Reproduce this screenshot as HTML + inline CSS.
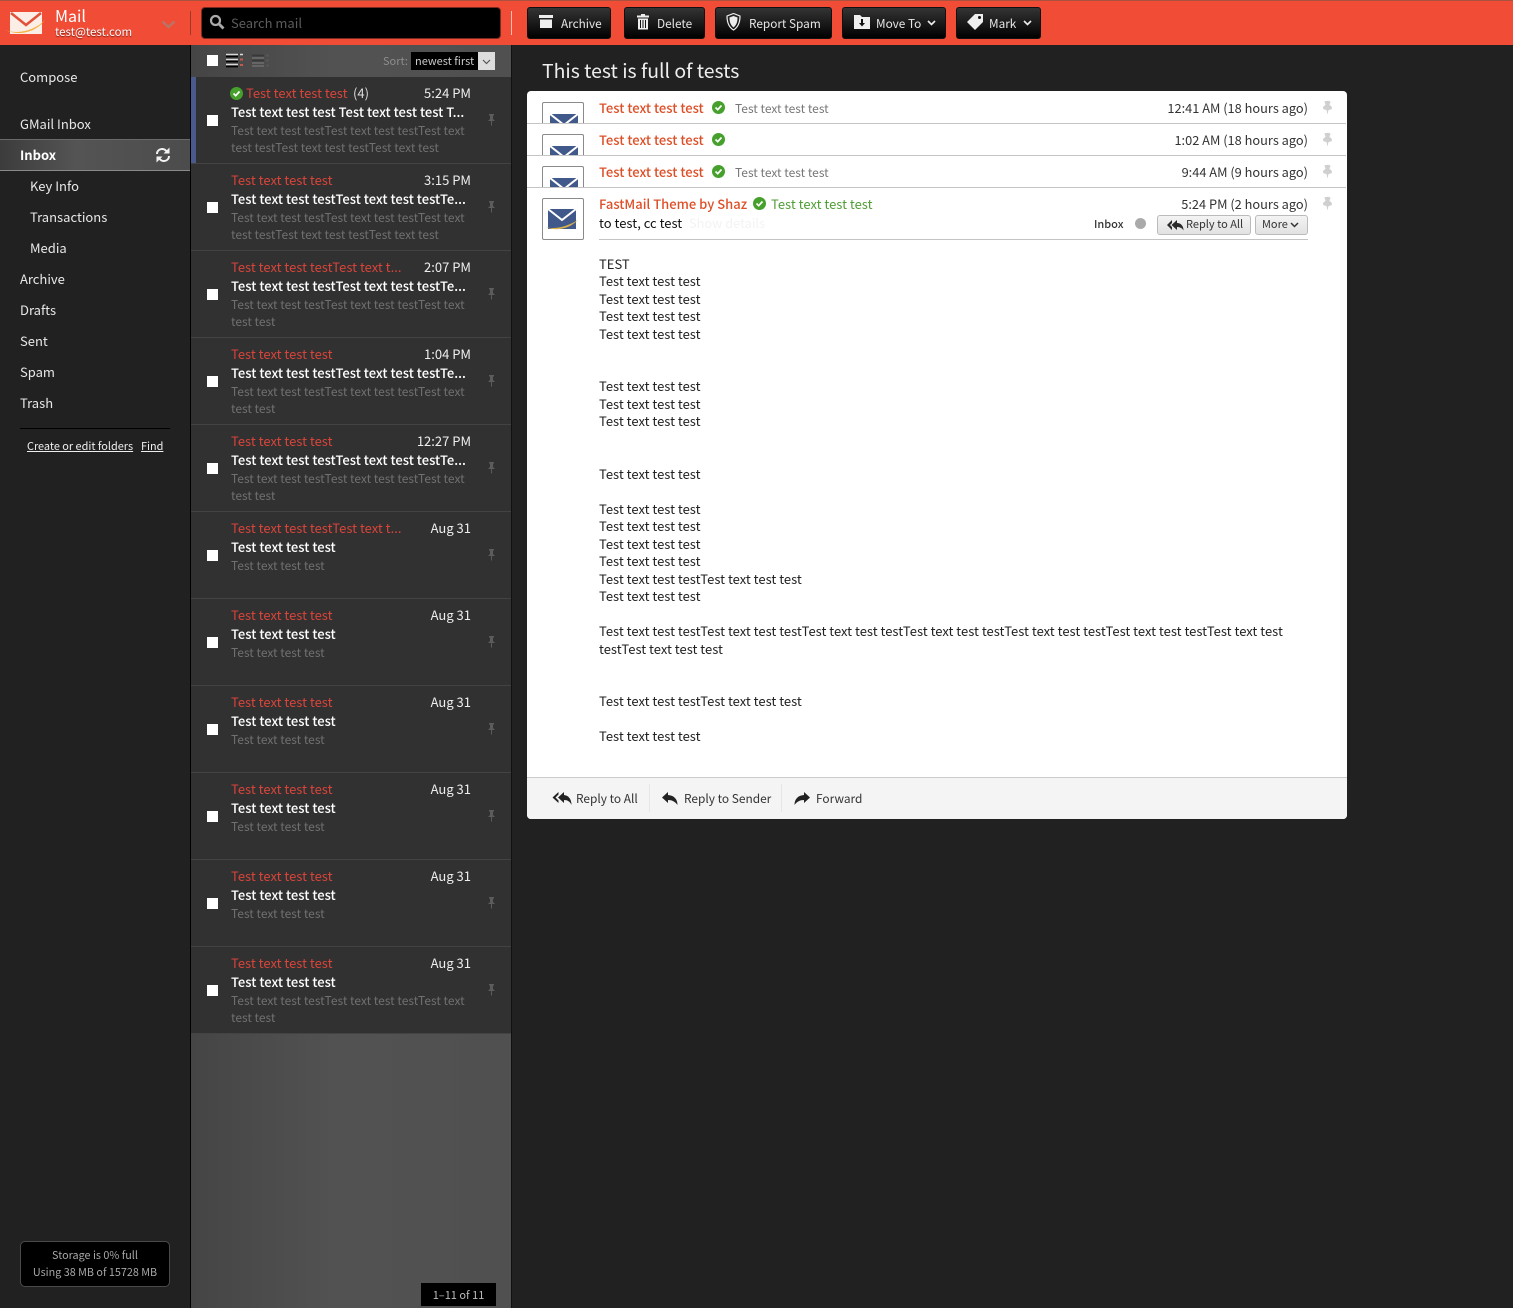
<!DOCTYPE html>
<html lang="en"><head><meta charset="utf-8"><title>Mail</title>
<style>
*{box-sizing:border-box}
html,body{margin:0;padding:0;width:1513px;height:1308px;overflow:hidden;background:#212121}
body{position:relative;font-family:"Noto Sans CJK JP","Liberation Sans",sans-serif;font-size:13px;color:#111}
.a,.t,svg{position:absolute}
.t{white-space:nowrap;line-height:18px}
.n{color:#e8e8e8;left:20px;font-size:13px}
.n2{left:30px}
.row{position:absolute;left:191px;width:320px;height:87px;background:#313131;border-bottom:1px solid #434343}
.cb{position:absolute;left:16px;top:38px;width:11px;height:11px;background:#fff}
.s{left:40px;top:7px;color:#d8443a;font-size:13px}
.d{right:40px;top:7px;color:#eee;font-size:13px}
.b{left:40px;top:26px;color:#fff;font-size:13px;font-weight:500;width:240px;overflow:hidden}
.p{left:40px;top:45px;color:#707070;font-size:12px;line-height:17px;white-space:normal;width:240px}
.pin{position:absolute;left:296px;top:37px}
.btn{position:absolute;top:7px;height:32px;border-radius:3px;background:linear-gradient(#343434,#000);border:1px solid #111}
.btn .t{color:#e6e6e6;font-size:11.800px;top:7px}
.on{color:#de4f27;font-weight:500;left:599px;font-size:13px}
.gr{color:#777;font-size:12px;left:735px}
.tm{right:205px;color:#333;font-size:12.800px}
.sep{position:absolute;left:527px;width:819px;height:1px;background:#c4c4c4}
.av{position:absolute;left:542px;width:42px;background:#fff;border:1px solid #8a8a8a;border-bottom:0;border-radius:2px 2px 0 0;overflow:hidden}
</style></head><body>

<!-- Header -->
<div class="a" style="left:0;top:0;width:1513px;height:45px;background:#f04c36;border-top:1px solid #a8533f"></div>
<svg style="left:5px;top:11px" width="41" height="24" viewBox="0 0 41 24"><path d="M5 1H37V23H5Z" fill="#fbeee6"/><path d="M6 2L21 14L36 2" fill="none" stroke="#e2503a" stroke-width="2.500"/><path d="M0 19C14 24 30 19 40 9C32 20 16 26 0 19Z" fill="#f6b13e"/></svg>
<div class="t" style="left:55px;top:6px;color:#fff;font-size:16px">Mail</div>
<div class="t" style="left:55px;top:23px;color:#fff;font-size:11.500px;text-shadow:0 1px 1px #7a1a10">test@test.com</div>
<svg style="left:161px;top:20px" width="15" height="9" viewBox="0 0 15 9"><path d="M1.500 1.500L7.500 7L13.500 1.500" fill="none" stroke="#b87465" stroke-width="2.500"/></svg>
<div class="a" style="left:190px;top:11px;width:1px;height:24px;background:#9c3a2a"></div>
<div class="a" style="left:201px;top:7px;width:300px;height:32px;background:#000;border-radius:4px;border:1px solid #7a2a1e"></div>
<svg style="left:209px;top:14px" width="16" height="16" viewBox="0 0 16 16"><circle cx="6.500" cy="6.500" r="4.500" fill="none" stroke="#aaa" stroke-width="2.200"/><path d="M10 10L14.500 14.500" stroke="#aaa" stroke-width="2.800"/></svg>
<div class="t" style="left:231px;top:14px;color:#5c5c5c;font-size:13px">Search mail</div>
<div class="a" style="left:511px;top:11px;width:1px;height:24px;background:#f7bcb0"></div>

<div class="btn" style="left:527px;width:84px"><svg style="left:11px;top:7px" width="15" height="14" viewBox="0 0 15 14"><path d="M0 0H14V3H0ZM1 4.500H13V13H1Z" fill="#eee"/></svg><div class="t" style="left:33px">Archive</div></div>
<div class="btn" style="left:624px;width:81px"><svg style="left:11px;top:6px" width="14" height="16" viewBox="0 0 14 16"><path d="M5 0H9V1.500H13V3.500H1V1.500H5ZM2 4.500H12V15.500H2Z" fill="#eee"/><path d="M4.500 6V14M7 6V14M9.500 6V14" stroke="#111" stroke-width="1"/></svg><div class="t" style="left:32px">Delete</div></div>
<div class="btn" style="left:715px;width:117px"><svg style="left:10px;top:5px" width="15" height="18" viewBox="0 0 15 18"><path d="M7.500 .500L14 3C14 9 12.500 14 7.500 17C2.500 14 1 9 1 3Z" fill="none" stroke="#eee" stroke-width="1.200"/><path d="M7.500 3L11.500 4.500C11.500 9 10.500 12 7.500 14.500C4.500 12 3.500 9 3.500 4.500Z" fill="#eee"/></svg><div class="t" style="left:33px">Report Spam</div></div>
<div class="btn" style="left:842px;width:104px"><svg style="left:11px;top:7px" width="16" height="14" viewBox="0 0 16 14"><path d="M0 0H6L8 2H16V14H0Z" fill="#eee"/><path d="M7 4H9V8H11L8 11.500L5 8H7Z" fill="#111"/></svg><div class="t" style="left:33px">Move To</div><svg style="left:84px;top:12px" width="9" height="6" viewBox="0 0 9 6"><path d="M1 1L4.500 4.500L8 1" fill="none" stroke="#eee" stroke-width="1.600"/></svg></div>
<div class="btn" style="left:956px;width:85px"><svg style="left:9px;top:5px" width="18" height="18" viewBox="0 0 18 18"><path d="M9 1H17V9L9 17L1 9Z" fill="#eee"/><circle cx="13.500" cy="4.500" r="1.500" fill="#111"/></svg><div class="t" style="left:32px">Mark</div><svg style="left:66px;top:12px" width="9" height="6" viewBox="0 0 9 6"><path d="M1 1L4.500 4.500L8 1" fill="none" stroke="#eee" stroke-width="1.600"/></svg></div>

<!-- Sidebar -->
<div class="t n" style="top:68px">Compose</div>
<div class="t n" style="top:115px">GMail Inbox</div>
<div class="a" style="left:0;top:139px;width:190px;height:32px;background:linear-gradient(90deg,#3c3c3c,#545454 40%,#4c4c4c);border-top:1px solid #6a6a6a;border-bottom:1px solid #8a8a8a"></div>
<div class="t" style="left:20px;top:146px;color:#fff;font-weight:700;font-size:13px">Inbox</div>
<svg style="left:155px;top:147px" width="16" height="16" viewBox="0 0 16 16"><path d="M2 7C2 3 6 1 9.500 2.500L12 4.500M14 9C14 13 10 15 6.500 13.500L4 11.500" fill="none" stroke="#f2f2f2" stroke-width="2"/><path d="M14.500 .500V6.500H8.500ZM1.500 15.500V9.500H7.500Z" fill="#f2f2f2"/></svg>
<div class="t n n2" style="top:177px">Key Info</div>
<div class="t n n2" style="top:208px">Transactions</div>
<div class="t n n2" style="top:239px">Media</div>
<div class="t n" style="top:270px">Archive</div>
<div class="t n" style="top:301px">Drafts</div>
<div class="t n" style="top:332px">Sent</div>
<div class="t n" style="top:363px">Spam</div>
<div class="t n" style="top:394px">Trash</div>
<div class="a" style="left:20px;top:428px;width:150px;height:1px;background:#000"></div>
<div class="t" style="left:27px;top:437px;color:#eee;font-size:10.900px;text-decoration:underline">Create or edit folders</div>
<div class="t" style="left:141px;top:437px;color:#eee;font-size:10.900px;text-decoration:underline">Find</div>
<div class="a" style="left:20px;top:1241px;width:150px;height:46px;background:#000;border:1px solid #4a4a4a;border-radius:5px"></div>
<div class="t" style="left:20px;width:150px;top:1246px;text-align:center;color:#a8a8a8;font-size:10.800px">Storage is 0% full</div>
<div class="t" style="left:20px;width:150px;top:1263px;text-align:center;color:#a8a8a8;font-size:10.800px">Using 38 MB of 15728 MB</div>

<!-- List -->
<div class="a" style="left:190px;top:45px;width:322px;height:1263px;background:linear-gradient(90deg,#454545,#525252 45%,#505050);border-left:1px solid #000;border-right:1px solid #111"></div>
<div class="a" style="left:207px;top:55px;width:11px;height:11px;background:#fff"></div>
<svg style="left:226px;top:53px" width="18" height="16" viewBox="0 0 18 16"><path d="M0 1.500H12M0 6.500H12M0 11.500H12" stroke="#d8d8d8" stroke-width="1.500"/><path d="M0 3.500H12M0 8.500H12M0 13.500H12" stroke="#000" stroke-width="1.800"/><path d="M14 1.500H17" stroke="#ddd" stroke-width="1.500"/><path d="M14 6.500H17M14 12H17" stroke="#c25a52" stroke-width="2"/></svg>
<svg style="left:252px;top:53px" width="18" height="16" viewBox="0 0 18 16"><path d="M0 2.500H12M0 7.500H12" stroke="#383838" stroke-width="1.800"/><path d="M0 5H12M0 10H12M0 13H12" stroke="#6e6e6e" stroke-width="1.500"/><path d="M14 2.500H17M14 7.500H17M14 12.500H17" stroke="#5e5454" stroke-width="2"/></svg>
<div class="t" style="left:383px;top:52px;color:#8d8d8d;font-size:11px">Sort:</div>
<div class="a" style="left:411px;top:52px;width:67px;height:18px;background:#000"></div>
<div class="t" style="left:415px;top:52px;color:#ccc;font-size:11px">newest first</div>
<div class="a" style="left:478px;top:52px;width:17px;height:18px;background:#ddd"></div>
<svg style="left:482px;top:59px" width="9" height="6" viewBox="0 0 9 6"><path d="M1 1L4.500 4.500L8 1" fill="none" stroke="#555" stroke-width="1.200"/></svg>

<div class="row" style="top:77px"><div class="a" style="left:0;top:0;width:5px;height:86px;background:#4b5a8c"></div><div class="cb"></div>
<svg style="left:39px;top:10px" width="13" height="13" viewBox="0 0 13 13"><circle cx="6.500" cy="6.500" r="6.500" fill="#46a02c"/><path d="M3.500 6.500L5.700 8.700L9.500 4.500" fill="none" stroke="#fff" stroke-width="1.700"/></svg>
<div class="t" style="left:55px;top:7px;color:#d8443a;font-size:13px">Test text test test</div><div class="t" style="left:162px;top:7px;color:#ddd;font-size:13px">(4)</div><div class="t d">5:24 PM</div>
<div class="t b">Test text test test Test text test test T...</div>
<div class="t p">Test text test testTest text test testTest text test testTest text test testTest text test</div>
<svg class="pin" width="9" height="12" viewBox="0 0 9 12"><path d="M2 0H7V1.500H6V5L8 7H5V11.500H4V7H1L3 5V1.500H2Z" fill="#5c5c5c"/></svg></div>

<div class="row" style="top:164px"><div class="cb"></div><div class="t s">Test text test test</div><div class="t d">3:15 PM</div>
<div class="t b">Test text test testTest text test testTe...</div>
<div class="t p">Test text test testTest text test testTest text test testTest text test testTest text test</div>
<svg class="pin" width="9" height="12" viewBox="0 0 9 12"><path d="M2 0H7V1.500H6V5L8 7H5V11.500H4V7H1L3 5V1.500H2Z" fill="#5c5c5c"/></svg></div>

<div class="row" style="top:251px"><div class="cb"></div><div class="t s">Test text test testTest text t...</div><div class="t d">2:07 PM</div>
<div class="t b">Test text test testTest text test testTe...</div>
<div class="t p">Test text test testTest text test testTest text test test</div>
<svg class="pin" width="9" height="12" viewBox="0 0 9 12"><path d="M2 0H7V1.500H6V5L8 7H5V11.500H4V7H1L3 5V1.500H2Z" fill="#5c5c5c"/></svg></div>

<div class="row" style="top:338px"><div class="cb"></div><div class="t s">Test text test test</div><div class="t d">1:04 PM</div>
<div class="t b">Test text test testTest text test testTe...</div>
<div class="t p">Test text test testTest text test testTest text test test</div>
<svg class="pin" width="9" height="12" viewBox="0 0 9 12"><path d="M2 0H7V1.500H6V5L8 7H5V11.500H4V7H1L3 5V1.500H2Z" fill="#5c5c5c"/></svg></div>

<div class="row" style="top:425px"><div class="cb"></div><div class="t s">Test text test test</div><div class="t d">12:27 PM</div>
<div class="t b">Test text test testTest text test testTe...</div>
<div class="t p">Test text test testTest text test testTest text test test</div>
<svg class="pin" width="9" height="12" viewBox="0 0 9 12"><path d="M2 0H7V1.500H6V5L8 7H5V11.500H4V7H1L3 5V1.500H2Z" fill="#5c5c5c"/></svg></div>

<div class="row" style="top:512px"><div class="cb"></div><div class="t s">Test text test testTest text t...</div><div class="t d">Aug 31</div>
<div class="t b">Test text test test</div>
<div class="t p">Test text test test</div>
<svg class="pin" width="9" height="12" viewBox="0 0 9 12"><path d="M2 0H7V1.500H6V5L8 7H5V11.500H4V7H1L3 5V1.500H2Z" fill="#5c5c5c"/></svg></div>

<div class="row" style="top:599px"><div class="cb"></div><div class="t s">Test text test test</div><div class="t d">Aug 31</div>
<div class="t b">Test text test test</div>
<div class="t p">Test text test test</div>
<svg class="pin" width="9" height="12" viewBox="0 0 9 12"><path d="M2 0H7V1.500H6V5L8 7H5V11.500H4V7H1L3 5V1.500H2Z" fill="#5c5c5c"/></svg></div>

<div class="row" style="top:686px"><div class="cb"></div><div class="t s">Test text test test</div><div class="t d">Aug 31</div>
<div class="t b">Test text test test</div>
<div class="t p">Test text test test</div>
<svg class="pin" width="9" height="12" viewBox="0 0 9 12"><path d="M2 0H7V1.500H6V5L8 7H5V11.500H4V7H1L3 5V1.500H2Z" fill="#5c5c5c"/></svg></div>

<div class="row" style="top:773px"><div class="cb"></div><div class="t s">Test text test test</div><div class="t d">Aug 31</div>
<div class="t b">Test text test test</div>
<div class="t p">Test text test test</div>
<svg class="pin" width="9" height="12" viewBox="0 0 9 12"><path d="M2 0H7V1.500H6V5L8 7H5V11.500H4V7H1L3 5V1.500H2Z" fill="#5c5c5c"/></svg></div>

<div class="row" style="top:860px"><div class="cb"></div><div class="t s">Test text test test</div><div class="t d">Aug 31</div>
<div class="t b">Test text test test</div>
<div class="t p">Test text test test</div>
<svg class="pin" width="9" height="12" viewBox="0 0 9 12"><path d="M2 0H7V1.500H6V5L8 7H5V11.500H4V7H1L3 5V1.500H2Z" fill="#5c5c5c"/></svg></div>

<div class="row" style="top:947px"><div class="cb"></div><div class="t s">Test text test test</div><div class="t d">Aug 31</div>
<div class="t b">Test text test test</div>
<div class="t p">Test text test testTest text test testTest text test test</div>
<svg class="pin" width="9" height="12" viewBox="0 0 9 12"><path d="M2 0H7V1.500H6V5L8 7H5V11.500H4V7H1L3 5V1.500H2Z" fill="#5c5c5c"/></svg></div>

<div class="a" style="left:421px;top:1283px;width:75px;height:23px;background:#000"></div>
<div class="t" style="left:421px;width:75px;top:1286px;text-align:center;color:#bbb;font-size:11px">1–11 of 11</div>

<!-- Conversation -->
<div class="t" style="left:542px;top:56px;color:#eee;font-size:19.400px;line-height:28px">This test is full of tests</div>
<div class="a" style="left:527px;top:91px;width:820px;height:728px;background:#fff;border-radius:4px"></div>

<div class="av" style="top:102px;height:21px"><svg style="left:6px;top:11px" width="30" height="22" viewBox="0 0 30 22"><path d="M1 0H29V20H1Z" fill="#41598a"/><path d="M1 0L15 11L29 0" fill="none" stroke="#fff" stroke-width="2"/></svg></div>
<div class="av" style="top:134px;height:21px"><svg style="left:6px;top:11px" width="30" height="22" viewBox="0 0 30 22"><path d="M1 0H29V20H1Z" fill="#41598a"/><path d="M1 0L15 11L29 0" fill="none" stroke="#fff" stroke-width="2"/></svg></div>
<div class="av" style="top:166px;height:21px"><svg style="left:6px;top:11px" width="30" height="22" viewBox="0 0 30 22"><path d="M1 0H29V20H1Z" fill="#41598a"/><path d="M1 0L15 11L29 0" fill="none" stroke="#fff" stroke-width="2"/></svg></div>
<div class="sep" style="top:123px"></div><div class="sep" style="top:155px"></div><div class="sep" style="top:187px"></div>

<div class="t on" style="top:99px">Test text test test</div>
<svg style="left:712px;top:101px" width="13" height="13" viewBox="0 0 13 13"><circle cx="6.500" cy="6.500" r="6.500" fill="#46a02c"/><path d="M3.500 6.500L5.700 8.700L9.500 4.500" fill="none" stroke="#fff" stroke-width="1.700"/></svg>
<div class="t gr" style="top:100px">Test text test test</div>
<div class="t tm" style="top:99px">12:41 AM (18 hours ago)</div>

<div class="t on" style="top:131px">Test text test test</div>
<svg style="left:712px;top:133px" width="13" height="13" viewBox="0 0 13 13"><circle cx="6.500" cy="6.500" r="6.500" fill="#46a02c"/><path d="M3.500 6.500L5.700 8.700L9.500 4.500" fill="none" stroke="#fff" stroke-width="1.700"/></svg>
<div class="t tm" style="top:131px">1:02 AM (18 hours ago)</div>

<div class="t on" style="top:163px">Test text test test</div>
<svg style="left:712px;top:165px" width="13" height="13" viewBox="0 0 13 13"><circle cx="6.500" cy="6.500" r="6.500" fill="#46a02c"/><path d="M3.500 6.500L5.700 8.700L9.500 4.500" fill="none" stroke="#fff" stroke-width="1.700"/></svg>
<div class="t gr" style="top:164px">Test text test test</div>
<div class="t tm" style="top:163px">9:44 AM (9 hours ago)</div>

<svg style="left:1322px;top:100px" width="11" height="15" viewBox="0 0 11 15"><path d="M2.500 2C2.500 .500 8.500 .500 8.500 2C8.500 3 7.500 3.500 7.500 4.500C7.500 5.500 10 6 10 8C10 9.500 7 10 6.500 10L5.500 14.500L4.500 10C4 10 1 9.500 1 8C1 6 3.500 5.500 3.500 4.500C3.500 3.500 2.500 3 2.500 2Z" fill="#cfcfcf"/></svg>
<svg style="left:1322px;top:132px" width="11" height="15" viewBox="0 0 11 15"><path d="M2.500 2C2.500 .500 8.500 .500 8.500 2C8.500 3 7.500 3.500 7.500 4.500C7.500 5.500 10 6 10 8C10 9.500 7 10 6.500 10L5.500 14.500L4.500 10C4 10 1 9.500 1 8C1 6 3.500 5.500 3.500 4.500C3.500 3.500 2.500 3 2.500 2Z" fill="#cfcfcf"/></svg>
<svg style="left:1322px;top:164px" width="11" height="15" viewBox="0 0 11 15"><path d="M2.500 2C2.500 .500 8.500 .500 8.500 2C8.500 3 7.500 3.500 7.500 4.500C7.500 5.500 10 6 10 8C10 9.500 7 10 6.500 10L5.500 14.500L4.500 10C4 10 1 9.500 1 8C1 6 3.500 5.500 3.500 4.500C3.500 3.500 2.500 3 2.500 2Z" fill="#cfcfcf"/></svg>
<svg style="left:1322px;top:196px" width="11" height="15" viewBox="0 0 11 15"><path d="M2.500 2C2.500 .500 8.500 .500 8.500 2C8.500 3 7.500 3.500 7.500 4.500C7.500 5.500 10 6 10 8C10 9.500 7 10 6.500 10L5.500 14.500L4.500 10C4 10 1 9.500 1 8C1 6 3.500 5.500 3.500 4.500C3.500 3.500 2.500 3 2.500 2Z" fill="#cfcfcf"/></svg>

<div class="a" style="left:542px;top:198px;width:42px;height:42px;border:1px solid #8a8a8a;border-radius:2px;background:#fff"></div>
<svg style="left:544px;top:208px" width="38" height="24" viewBox="0 0 38 24"><path d="M4 1H32V21H4Z" fill="#41598a"/><path d="M4 1L18 12L32 1" fill="none" stroke="#fff" stroke-width="2"/><path d="M1 19C12 22 24 18 34 12C26 20 14 24 1 19Z" fill="#d9b24c"/></svg>
<div class="t on" style="top:195px">FastMail Theme by Shaz</div>
<svg style="left:753px;top:197px" width="13" height="13" viewBox="0 0 13 13"><circle cx="6.500" cy="6.500" r="6.500" fill="#46a02c"/><path d="M3.500 6.500L5.700 8.700L9.500 4.500" fill="none" stroke="#fff" stroke-width="1.700"/></svg>
<div class="t" style="left:771px;top:195px;color:#4f9e36;font-size:13px">Test text test test</div>
<div class="t tm" style="top:195px">5:24 PM (2 hours ago)</div>
<div class="t" style="left:599px;top:214px;color:#111;font-size:13px">to test, cc test</div>
<div class="t" style="left:689px;top:214px;color:#f3f3f3;font-size:12.800px">Show details</div>
<div class="t" style="left:1094px;top:215px;color:#333;font-size:11px;font-weight:500">Inbox</div>
<div class="a" style="left:1135px;top:218px;width:11px;height:11px;border-radius:50%;background:#aaa"></div>
<div class="a" style="left:1157px;top:215px;width:94px;height:20px;border:1px solid #bbb;border-radius:3px;background:linear-gradient(#f4f4f4,#e2e2e2)"></div>
<svg style="left:1166px;top:219px" width="18" height="12" viewBox="0 0 18 12"><path d="M6 1L1 6L6 11V8L4 6L6 4ZM11 1L5.500 6L11 11V8C14 8 16 9 17.500 11.500C17.500 7 15 4 11 4Z" fill="#2a2a2a"/></svg>
<div class="t" style="left:1186px;top:215px;color:#333;font-size:11px">Reply to All</div>
<div class="a" style="left:1255px;top:215px;width:53px;height:20px;border:1px solid #bbb;border-radius:3px;background:linear-gradient(#f4f4f4,#e2e2e2)"></div>
<div class="t" style="left:1262px;top:215px;color:#333;font-size:11px">More</div>
<svg style="left:1290px;top:222px" width="9" height="6" viewBox="0 0 9 6"><path d="M1 1L4.500 4.500L8 1" fill="none" stroke="#333" stroke-width="1.500"/></svg>
<div class="a" style="left:599px;top:239px;width:709px;height:1px;background:#c4c4c4"></div>

<div class="a" style="left:599px;top:254.750px;width:709px;line-height:17.500px;color:#222;font-size:13px">TEST<br>Test text test test<br>Test text test test<br>Test text test test<br>Test text test test<br><br><br>Test text test test<br>Test text test test<br>Test text test test<br><br><br>Test text test test<br><br>Test text test test<br>Test text test test<br>Test text test test<br>Test text test test<br>Test text test testTest text test test<br>Test text test test<br><br>Test text test testTest text test testTest text test testTest text test testTest text test testTest text test testTest text test<br>testTest text test test<br><br><br>Test text test testTest text test test<br><br>Test text test test</div>

<div class="a" style="left:527px;top:777px;width:820px;height:42px;background:#f4f4f4;border-top:1px solid #ccc;border-radius:0 0 4px 4px"></div>
<svg style="left:552px;top:791px" width="20" height="15" viewBox="0 0 20 15"><path d="M6.500 1L.500 6.500L6.500 12V9.500L3.500 6.500L6.500 3.500ZM12 1L6 6.500L12 12V9C15.500 9 18 10.500 19.500 14C19.500 8 16.500 4.500 12 4Z" fill="#222"/></svg>
<div class="t" style="left:576px;top:790px;color:#333;font-size:11.900px">Reply to All</div>
<div class="a" style="left:649px;top:784px;width:1px;height:28px;background:#e6e6e6"></div>
<svg style="left:661px;top:791px" width="18" height="15" viewBox="0 0 18 15"><path d="M7 1L1 6.500L7 12V9C11 9 14 10.500 16.500 14C16.500 8 13 4.500 7 4Z" fill="#222"/></svg>
<div class="t" style="left:684px;top:790px;color:#333;font-size:11.900px">Reply to Sender</div>
<div class="a" style="left:781px;top:784px;width:1px;height:28px;background:#e6e6e6"></div>
<svg style="left:793px;top:791px" width="18" height="15" viewBox="0 0 18 15"><path d="M11 1L17 6.500L11 12V9C7 9 4 10.500 1.500 14C1.500 8 5 4.500 11 4Z" fill="#222"/></svg>
<div class="t" style="left:816px;top:790px;color:#333;font-size:11.900px">Forward</div>
</body></html>
